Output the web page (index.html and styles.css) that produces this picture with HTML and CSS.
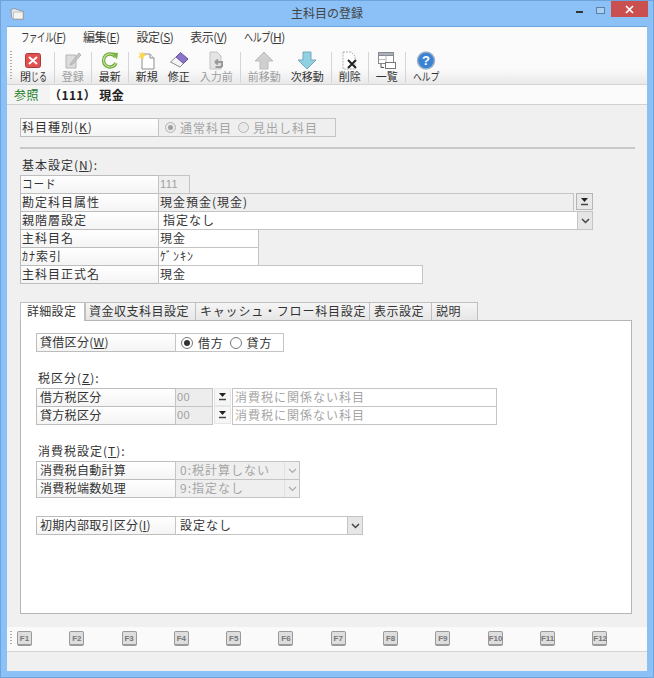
FILE: index.html
```html
<!DOCTYPE html>
<html lang="ja">
<head>
<meta charset="utf-8">
<title>主科目の登録</title>
<link rel="stylesheet" href="styles.css">
</head>
<body>
<div class="window">
  <header class="titlebar">
    <svg class="app-icon" width="15" height="14" viewBox="0 0 15 14"><path d="M1 2.500 4 1.500 13.500 4.500V12.500L3.500 12.500 1.500 10Z" fill="#e6e9ee" stroke="#8f9aaa"/><path d="M3.500 5H13V12H3.500Z" fill="#f5f5ef" stroke="#a8b0ba" stroke-width=".7"/></svg>
    <div class="title">主科目の登録</div>
    <div class="controls">
      <span class="ctl-min"></span>
      <span class="ctl-max"></span>
      <span class="ctl-close"><svg width="9" height="9" viewBox="0 0 9 9"><path d="M1 1 8 8M8 1 1 8" stroke="#fff" stroke-width="1.700"/></svg></span>
    </div>
  </header>
  <div class="client">
    <nav class="menubar">
      <span class="menu"><span class="sq sq-file">ファイル</span>(<u>F</u>)</span>
      <span class="menu">編集(<u>E</u>)</span>
      <span class="menu">設定(<u>S</u>)</span>
      <span class="menu">表示(<u>V</u>)</span>
      <span class="menu"><span class="sq sq-help">ヘルプ</span>(<u>H</u>)</span>
    </nav>
    <div class="toolbar">
      <span class="grip"></span>
      <div class="tool first">
        <svg width="20" height="19" viewBox="0 0 20 19"><rect x="2.500" y="2.500" width="15" height="14" rx="2" fill="#e25050" stroke="#a83a3a"/><path d="M6 6 14 13M14 6 6 13" stroke="#fff" stroke-width="2"/></svg>
        <span>閉<span class="sq sq-tool-close">じる</span></span>
      </div>
      <span class="sep"></span>
      <div class="tool off">
        <svg width="20" height="19" viewBox="0 0 20 19"><path d="M3 4H13V17H3Z" fill="#dcdcdc" stroke="#b5b5b5"/><path d="M8 12 16 2 18 4 10 13 7 14Z" fill="#c6c6c6" stroke="#a5a5a5" stroke-width=".7"/></svg>
        <span>登録</span>
      </div>
      <span class="sep"></span>
      <div class="tool">
        <svg width="20" height="19" viewBox="0 0 20 19"><path d="M15.500 6A6.500 6.500 0 1 0 16 12" fill="none" stroke="#6aa636" stroke-width="3.400"/><path d="M15.500 6A6.500 6.500 0 1 0 16 12" fill="none" stroke="#c4e29a" stroke-width="1.200"/><path d="M12 1.500 18 2 17 8.500Z" fill="#79b23f"/></svg>
        <span>最新</span>
      </div>
      <span class="sep"></span>
      <div class="tool">
        <svg width="20" height="19" viewBox="0 0 20 19"><path d="M5 3H13L17 7V18H5Z" fill="#fff" stroke="#8e8e8e"/><path d="M13 3V7H17" fill="#eee" stroke="#8e8e8e"/><path d="M5 0 6.200 3 9.500 4 6.700 5.700 6.500 9 4.500 6.500 1 7 3 4.500 2 1.500 4.500 2.500Z" fill="#fbd94a"/></svg>
        <span>新規</span>
      </div>
      <div class="tool">
        <svg width="20" height="19" viewBox="0 0 20 19"><path d="M7.500 5.500 15 12 11 16 1.500 11Z" fill="#f4f4f6" stroke="#8d8d8d"/><path d="M11.500 1.500 19 8 14.500 12.500 7 6Z" fill="#8b74c9" stroke="#65539c"/></svg>
        <span>修正</span>
      </div>
      <div class="tool off">
        <svg width="20" height="19" viewBox="0 0 20 19"><path d="M4 1H11L15 5V18H4Z" fill="#e4e4e4" stroke="#c2c2c2"/><path d="M16 16H9.500M16 16V11H9M9 11 12 8.500M9 11 12 13.500" fill="none" stroke="#9a9a9a" stroke-width="2"/></svg>
        <span>入力前</span>
      </div>
      <span class="sep"></span>
      <div class="tool off">
        <svg width="20" height="19" viewBox="0 0 20 19"><path d="M10 1 19 10H14V18H6V10H1Z" fill="#cfcfcf" stroke="#bdbdbd"/></svg>
        <span>前移動</span>
      </div>
      <div class="tool">
        <svg width="20" height="19" viewBox="0 0 20 19"><path d="M6 1H14V9H19L10 18 1 9H6Z" fill="#8fd0e2" stroke="#74a9ba"/></svg>
        <span>次移動</span>
      </div>
      <span class="sep"></span>
      <div class="tool">
        <svg width="20" height="19" viewBox="0 0 20 19"><path d="M3 1H11L15 5V18H3Z" fill="#fff" stroke="#b0b0b0" stroke-dasharray="2 1"/><path d="M8 9 16 17M16 9 8 17" stroke="#222" stroke-width="2"/></svg>
        <span>削除</span>
      </div>
      <span class="sep"></span>
      <div class="tool">
        <svg width="20" height="19" viewBox="0 0 20 19"><rect x="1.500" y="1.500" width="15" height="11" fill="#fff" stroke="#888"/><path d="M1.500 1.500H16.500V4.500H1.500Z" fill="#a9b2bd" stroke="#888"/><path d="M9 4.500V12.500M2 8.500H9" stroke="#bbb"/><rect x="8.500" y="11.500" width="10" height="6" fill="#fff" stroke="#777"/><path d="M4 13V16.500H7" fill="none" stroke="#555"/></svg>
        <span>一覧</span>
      </div>
      <span class="sep"></span>
      <div class="tool">
        <svg width="20" height="19" viewBox="0 0 20 19"><circle cx="10" cy="9.500" r="8.500" fill="#3a83d4" stroke="#9fb0c4" stroke-width="1.500"/><text class="help-mark" x="10" y="14" text-anchor="middle">?</text></svg>
        <span class="sq sq-tool-help">ヘルプ</span>
      </div>
    </div>
    <div class="modebar"><span class="mode">参照</span><span class="mode-title">（111） 現金</span></div>

    <main class="form">
      <div class="row kind">
        <div class="lbl">科目種別(<u>K</u>)</div>
        <div class="val radio-val off-text">
          <span class="radio checked dim"></span>通常科目
          <span class="radio dim"></span>見出し科目
        </div>
      </div>
      <hr class="rule">
      <div class="group-title basic">基本設定(<u>N</u>):</div>
      <div class="row">
        <div class="lbl"><span class="sq sq-code">コード</span></div>
        <div class="val gray num w-code">111</div>
      </div>
      <div class="row">
        <div class="lbl">勘定科目属性</div>
        <div class="val gray w-attr dark">現金預金(現金)</div>
        <div class="pick"><svg width="9" height="8" viewBox="0 0 9 8"><path d="M1 0H8L4.500 4Z" fill="#222"/><path d="M1 6.500H8" stroke="#444" stroke-width="1.500"/></svg></div>
      </div>
      <div class="row">
        <div class="lbl">親階層設定</div>
        <div class="val white w-parent pad">指定なし<span class="drop"><svg width="9" height="6" viewBox="0 0 9 6"><path d="M1 1 4.500 4.500 8 1" fill="none" stroke="#444" stroke-width="1.500"/></svg></span></div>
      </div>
      <div class="row">
        <div class="lbl">主科目名</div>
        <div class="val white w-name">現金</div>
      </div>
      <div class="row">
        <div class="lbl">ｶﾅ索引</div>
        <div class="val white w-name">ｹﾞﾝｷﾝ</div>
      </div>
      <div class="row">
        <div class="lbl">主科目正式名</div>
        <div class="val white w-formal">現金</div>
      </div>

      <div class="tabs">
        <div class="tab active">詳細設定</div>
        <div class="tab t-fund">資金収支科目設定</div>
        <div class="tab t-cash">キャッシュ・フロー科目設定</div>
        <div class="tab t-show">表示設定</div>
        <div class="tab t-note">説明</div>
      </div>
      <section class="panel">
        <div class="row side">
          <div class="lbl wide">貸借区分(<u>W</u>)</div>
          <div class="val white radio-val w-side">
            <span class="radio checked"></span>借方
            <span class="radio"></span>貸方
          </div>
        </div>

        <div class="group-title tax">税区分(<u>Z</u>):</div>
        <div class="row">
          <div class="lbl wide">借方税区分</div>
          <div class="val gray num w-tax">00</div>
          <div class="pick small"><svg width="9" height="8" viewBox="0 0 9 8"><path d="M1 0H8L4.500 4Z" fill="#222"/><path d="M1 6.500H8" stroke="#444" stroke-width="1.500"/></svg></div>
          <div class="val white w-taxname off-text">消費税に関係ない科目</div>
        </div>
        <div class="row">
          <div class="lbl wide">貸方税区分</div>
          <div class="val gray num w-tax">00</div>
          <div class="pick small"><svg width="9" height="8" viewBox="0 0 9 8"><path d="M1 0H8L4.500 4Z" fill="#222"/><path d="M1 6.500H8" stroke="#444" stroke-width="1.500"/></svg></div>
          <div class="val white w-taxname off-text">消費税に関係ない科目</div>
        </div>

        <div class="group-title tax tax-second">消費税設定(<u>T</u>):</div>
        <div class="row">
          <div class="lbl wide">消費税自動計算</div>
          <div class="val gray w-auto off-text pad">0:税計算しない<span class="drop faint"><svg width="9" height="6" viewBox="0 0 9 6"><path d="M1 1 4.500 4.500 8 1" fill="none" stroke="#aaa" stroke-width="1.200"/></svg></span></div>
        </div>
        <div class="row">
          <div class="lbl wide">消費税端数処理</div>
          <div class="val gray w-auto off-text pad">9:指定なし<span class="drop faint"><svg width="9" height="6" viewBox="0 0 9 6"><path d="M1 1 4.500 4.500 8 1" fill="none" stroke="#aaa" stroke-width="1.200"/></svg></span></div>
        </div>

        <div class="row initial">
          <div class="lbl wide">初期内部取引区分(<u>I</u>)</div>
          <div class="val white w-initial pad">設定なし<span class="drop"><svg width="9" height="6" viewBox="0 0 9 6"><path d="M1 1 4.500 4.500 8 1" fill="none" stroke="#444" stroke-width="1.500"/></svg></span></div>
        </div>
      </section>
    </main>

    <div class="fnbar">
      <span class="grip short"></span>
      <div class="fnkeys">
        <span class="fn">F1</span><span class="fn">F2</span><span class="fn">F3</span><span class="fn">F4</span><span class="fn">F5</span><span class="fn">F6</span><span class="fn">F7</span><span class="fn">F8</span><span class="fn">F9</span><span class="fn">F10</span><span class="fn">F11</span><span class="fn">F12</span>
      </div>
    </div>
    <footer class="statusbar"></footer>
  </div>
</div>
</body>
</html>
```

FILE: styles.css
```css
* { box-sizing: border-box; }
html, body { margin: 0; height: 100%; }
body {
  font-family: "Noto Sans CJK JP", "Noto Sans", sans-serif;
  font-size: 12px;
  color: #333;
  overflow: hidden;
}
u { text-underline-offset: 1px; }

/* narrow kana, as the proportional UI font in the reference draws them */
.sq { display: inline-block; transform-origin: 0 50%; white-space: nowrap; }
.sq-file { transform: scaleX(.7); margin-right: -14.400px; }
.sq-help { transform: scaleX(.75); margin-right: -9px; }
.sq-tool-close { transform: scaleX(.72); margin-right: -6.200px; }
.sq-tool-help { transform: scaleX(.8); margin-right: -6.600px; }
.sq-code { transform: scaleX(.88); margin-right: -5px; }

.window {
  width: 654px;
  height: 678px;
  display: flex;
  flex-direction: column;
  background: #8bc1f6;
  border: 1px solid #6ea3dc;
  padding: 0 6px 6px;
}
.titlebar {
  height: 25px;
  flex: none;
  display: flex;
  align-items: flex-start;
  position: relative;
}
.app-icon { margin: 6px 0 0 3px; }
.title {
  position: absolute;
  left: 0;
  right: 0;
  top: 2px;
  text-align: center;
  font-size: 12px;
  line-height: 20px;
  color: #444;
}
.controls {
  margin-left: auto;
  display: flex;
  align-items: flex-start;
  position: relative;
}
.ctl-min { width: 7px; height: 2px; background: #333; margin: 10px 13px 0 0; }
.ctl-max { width: 9px; height: 7px; border: 1px solid #5d7fa5; background: #a9cff5; margin: 6px 6px 0 0; }
.ctl-close {
  width: 37px;
  height: 16px;
  margin-right: -1px;
  background: #c9504f;
  display: flex;
  align-items: center;
  justify-content: center;
}

.client {
  flex: 1;
  min-height: 0;
  display: flex;
  flex-direction: column;
  background: #f0f0f0;
  border-top: 1px solid #6ea3dc;
}
.menubar {
  height: 20px;
  flex: none;
  display: flex;
  align-items: center;
  background: #fbfbfb;
  padding-left: 14px;
  color: #3a3a3a;
}
.menu { margin-right: 17px; line-height: 18px; letter-spacing: -.5px; }
.toolbar {
  height: 38px;
  flex: none;
  display: flex;
  align-items: flex-start;
  background: linear-gradient(#fbfbfb, #fafafa 60%, #e9e9e9);
  border-bottom: 1px solid #d4d4d4;
  padding: 4px 0 0 3px;
}
.grip {
  width: 2px;
  height: 29px;
  margin-right: 2px;
  background: repeating-linear-gradient(#aaa 0 1px, transparent 1px 3px);
  flex: none;
}
.tool {
  padding: 0 5px;
  display: flex;
  flex-direction: column;
  align-items: center;
  font-size: 11px;
  line-height: 13px;
  color: #333;
}
.tool.first { margin-left: 1px; }
.tool svg { display: block; }
.tool.off { color: #9d9d9d; }
.sep {
  width: 1px;
  height: 31px;
  margin: 1px 2px 0;
  background: #d5d5d5;
  flex: none;
}
.help-mark { font: bold 13px "Liberation Sans", sans-serif; fill: #fff; }

.modebar {
  height: 20px;
  flex: none;
  display: flex;
  align-items: center;
  background: #fbfbfb;
  border-bottom: 1px solid #d0d0d0;
}
.mode {
  width: 43px;
  height: 100%;
  padding-left: 7px;
  background: #f4f4f4;
  color: #1f7f2a;
  line-height: 20px;
  letter-spacing: .5px;
}
.mode-title {
  margin-left: -1px;
  font-weight: 700;
  letter-spacing: .4px;
  color: #222;
  line-height: 20px;
}

.form {
  flex: 1;
  min-height: 0;
  display: flex;
  flex-direction: column;
  padding: 13px 15px 13px 13px;
}
.row {
  display: flex;
  height: 19px;
  flex: none;
  margin-bottom: -1px;
  letter-spacing: 1px;
  line-height: 16px;
}
.lbl {
  width: 139px;
  flex: none;
  padding-left: 1px;
  border: 1px solid #bdbdbd;
  background: linear-gradient(#fff, #f4f4f4);
  color: #333;
}
.lbl.wide { width: 140px; padding-left: 3px; letter-spacing: .3px; }
.val {
  margin-left: -1px;
  border: 1px solid #c4c4c4;
  padding-left: 1px;
  position: relative;
  white-space: nowrap;
}
.val.pad { padding-left: 4px; }
.gray { background: #efefef; }
.white { background: #fff; }
.off-text { color: #a5a5a5; }
.dark { color: #333; }
.num { font-family: "Liberation Sans", sans-serif; font-size: 11px; color: #a0a0a0; letter-spacing: .5px; padding-left: 1px; }
.radio-val { display: flex; align-items: center; padding-left: 6px; }
.kind .radio-val { width: 178px; background: #efefef; }
.radio {
  width: 11px;
  height: 11px;
  margin-right: 4px;
  border: 1px solid #777;
  border-radius: 50%;
  background: #fff;
  flex: none;
  position: relative;
}
.radio-val .radio:not(:first-child) { margin-left: 6px; }
.radio.checked::after {
  content: "";
  position: absolute;
  inset: 2px;
  border-radius: 50%;
  background: #333;
}
.radio.dim { border-color: #b5b5b5; background: #eaeaea; }
.radio.dim.checked::after { background: #a0a0a0; }
.rule {
  width: 615px;
  margin: 11px 0 0;
  border: 0;
  height: 2px;
  background: #c8c8c8;
  flex: none;
}
.group-title { flex: none; letter-spacing: 1px; line-height: 17px; }
.basic { margin: 7px 0 2px 2px; }
.w-code { width: 32px; }
.w-attr { width: 416px; }
.w-parent { width: 435px; }
.w-name { width: 101px; }
.w-formal { width: 265px; }
.pick {
  width: 17px;
  height: 17px;
  margin-left: 2px;
  border: 1px solid #b5b5b5;
  background: #e8e8e8;
  display: flex;
  align-items: center;
  justify-content: center;
  flex: none;
}
.pick.small { margin-left: 1px; margin-right: 1px; height: 18px; border-color: #e6e6e6; background: #f6f6f6; }
.drop {
  position: absolute;
  right: 0;
  top: 0;
  bottom: 0;
  width: 15px;
  display: flex;
  align-items: center;
  justify-content: center;
  background: #e6e6e6;
  border-left: 1px solid #c4c4c4;
}
.drop.faint { background: #efefef; border-left-color: #e0e0e0; }

.tabs { display: flex; margin-top: 19px; flex: none; height: 18px; position: relative; }
.tab {
  border: 1px solid #c0c0c0;
  border-bottom: 0;
  margin-right: -1px;
  padding-left: 3px;
  letter-spacing: .5px;
  line-height: 16px;
  background: linear-gradient(#f5f5f5, #e6e6e6);
  white-space: nowrap;
  height: 18px;
  width: 111px;
}
.tab.active {
  width: 65px;
  height: 19px;
  padding-left: 6px;
  background: #fff;
  position: relative;
  z-index: 1;
  margin-right: 0;
  letter-spacing: .3px;
}
.t-cash { width: 175px; letter-spacing: .8px; padding-left: 4px; }
.t-show { width: 63px; padding-left: 4px; }
.t-note { width: 47px; padding-left: 4px; }
.panel {
  flex: 1;
  width: 612px;
  min-height: 0;
  background: #fff;
  border: 1px solid #b5b5b5;
  padding: 12px 15px;
}
.side { height: 19px; margin-bottom: 0; }
.w-side { width: 109px; padding-left: 5px; letter-spacing: .8px; }
.side .radio { width: 12px; height: 12px; margin-right: 5px; }
.tax { margin: 17px 0 2px 2px; }
.tax-second { margin-top: 18px; }
.w-tax { width: 38px; background: #ededed; }
.w-taxname { width: 265px; margin-left: 0; padding-left: 2px; }
.w-auto { width: 125px; }
.initial { margin-top: 19px; }
.w-initial { width: 188px; }

.fnbar {
  height: 25px;
  flex: none;
  display: flex;
  align-items: center;
  background: #fafafa;
  border-bottom: 1px solid #d4d4d4;
  padding: 0 0 2px 3px;
}
.grip.short { height: 14px; margin-right: 5px; }
.fnkeys { display: flex; gap: 37.300px; }
.fn {
  width: 15px;
  height: 15px;
  border: 1px solid #9a9a9a;
  border-bottom-width: 2px;
  border-radius: 2px;
  background: #dedede;
  font: bold 8px/13px "Liberation Sans", sans-serif;
  text-align: center;
  color: #777;
  white-space: nowrap;
}
.statusbar { height: 19px; flex: none; background: #f0f0f0; }
```
